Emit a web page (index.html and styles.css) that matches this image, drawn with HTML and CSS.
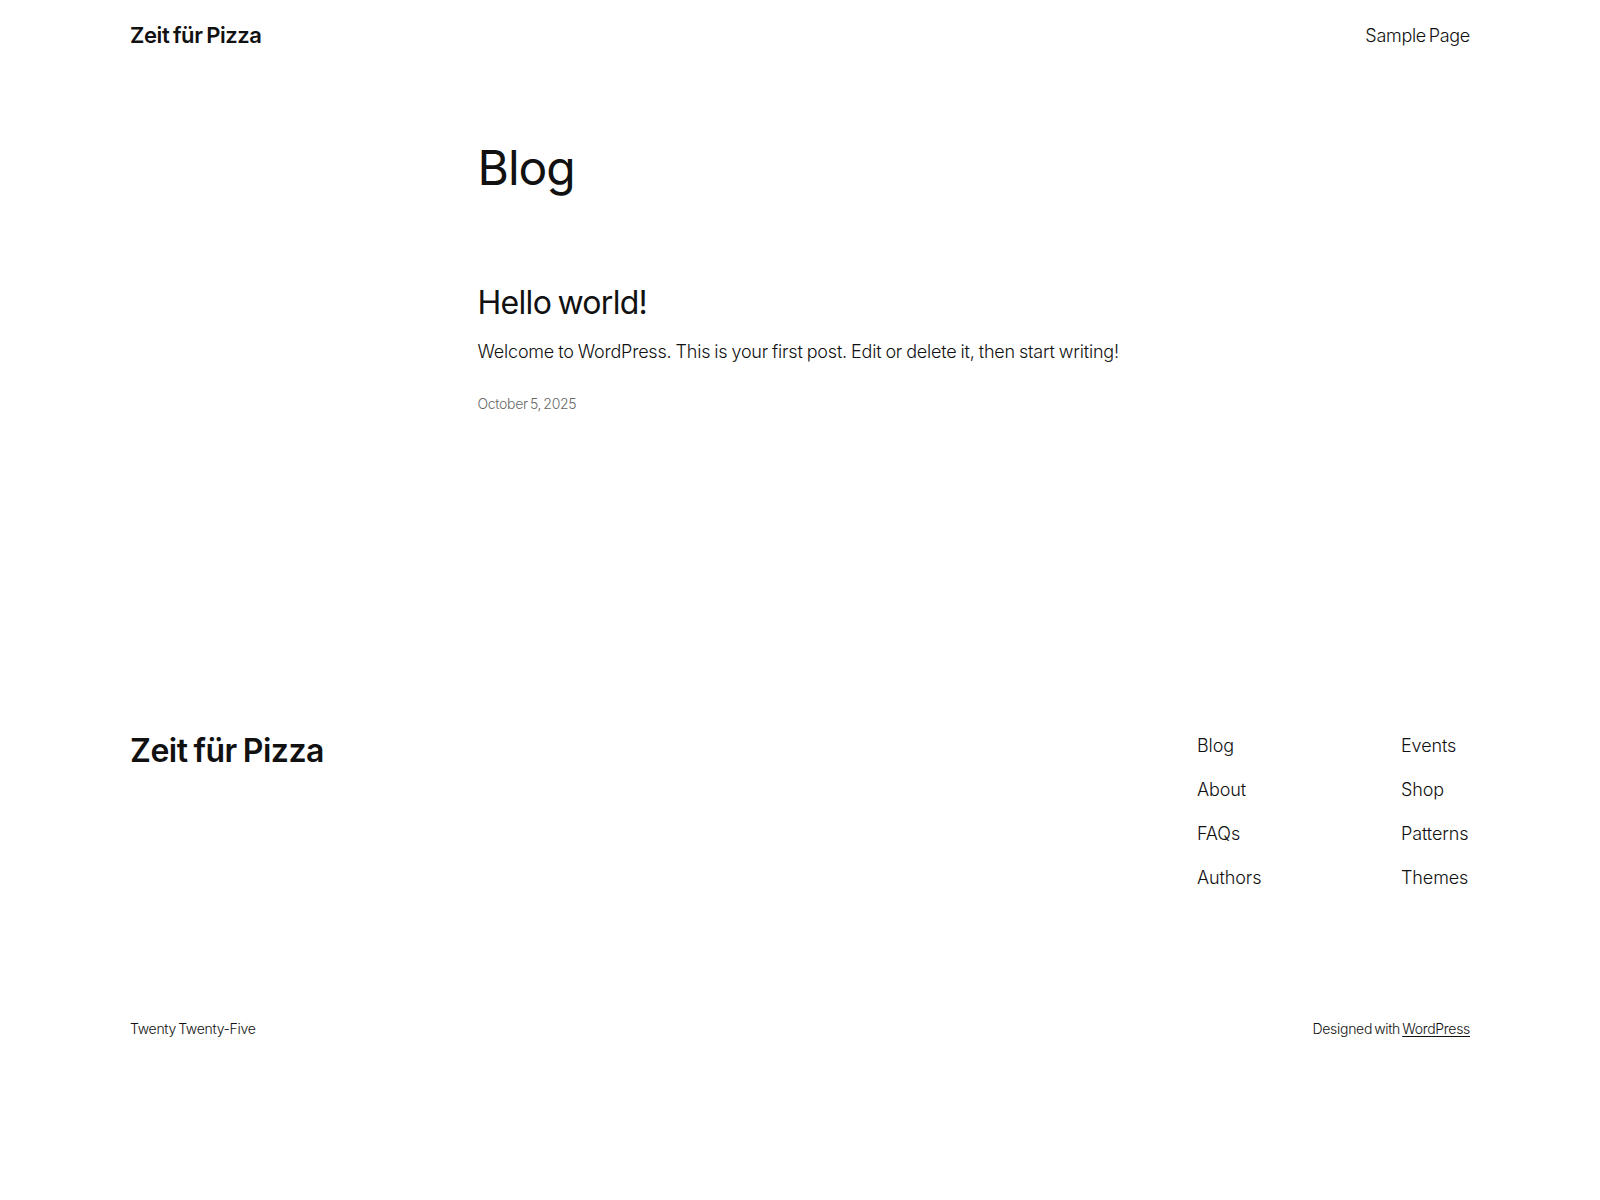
FILE: index.html
```html
<!DOCTYPE html>
<html lang="de">
<head>
<meta charset="utf-8">
<title>Blog – Zeit für Pizza</title>
<link rel="stylesheet" href="styles.css">
</head>
<body>
<header class="site-header">
  <div class="wide header-inner">
    <a class="site-title" href="#">Zeit für Pizza</a>
    <nav class="header-nav"><a href="#">Sample Page</a></nav>
  </div>
</header>
<main class="content">
  <h1 class="page-title">Blog</h1>
  <article class="post">
    <h2 class="post-title"><a href="#">Hello world!</a></h2>
    <p class="post-excerpt">Welcome to WordPress. This is your first post. Edit or delete it, then start writing!</p>
    <div class="post-date">October 5, 2025</div>
  </article>
</main>
<footer class="site-footer">
  <div class="wide footer-top">
    <a class="footer-title" href="#">Zeit für Pizza</a>
    <div class="footer-navs">
      <nav class="footer-col col-a">
        <a href="#">Blog</a>
        <a href="#">About</a>
        <a href="#">FAQs</a>
        <a href="#">Authors</a>
      </nav>
      <nav class="footer-col col-b">
        <a href="#">Events</a>
        <a href="#">Shop</a>
        <a href="#">Patterns</a>
        <a href="#">Themes</a>
      </nav>
    </div>
  </div>
  <div class="wide footer-bottom">
    <span>Twenty Twenty-Five</span>
    <span>Designed with <a class="underline" href="#">WordPress</a></span>
  </div>
</footer>
</body>
</html>
```
FILE: styles.css
```css
html, body {
  margin: 0;
  padding: 0;
  background: #ffffff;
}
body {
  font-family: Inter, "Noto Sans", sans-serif;
  font-weight: 300;
  font-size: 18px;
  line-height: 1.4;
  letter-spacing: -0.1px;
  color: #111111;
}
a {
  color: #111111;
  text-decoration: none;
}
.wide {
  width: 1340px;
  margin: 0 auto;
}
.site-header {
  padding: 20px 0;
}
.header-inner {
  display: flex;
  justify-content: space-between;
  align-items: center;
}
.site-title {
  font-size: 22px;
  font-weight: 600;
  line-height: 1.4;
  letter-spacing: -0.4px;
  word-spacing: -1.5px;
}
.header-nav a {
  font-size: 18px;
  font-weight: 300;
  letter-spacing: -0.3px;
  word-spacing: -2px;
}
.content {
  width: 645px;
  margin: 0 auto;
  padding-top: 70px;
}
.page-title {
  margin: 0;
  font-size: 48px;
  font-weight: 400;
  line-height: 1.125;
  letter-spacing: -1px;
}
.post {
  margin-top: 90px;
}
.post-title {
  margin: 0;
  font-size: 32px;
  font-weight: 400;
  line-height: 1.125;
  letter-spacing: -0.7px;
  word-spacing: -2px;
}
.post-excerpt {
  margin: 18px 0 0;
  letter-spacing: -0.2px;
  word-spacing: -0.8px;
  white-space: nowrap;
}
.post-date {
  margin-top: 30px;
  font-size: 14px;
  color: #686868;
  letter-spacing: -0.3px;
  word-spacing: -1.5px;
}
.site-footer {
  margin-top: 319px;
}
.footer-top {
  display: flex;
  justify-content: space-between;
  align-items: flex-start;
}
.footer-title {
  font-size: 32px;
  font-weight: 600;
  line-height: 1.125;
  letter-spacing: -0.5px;
  word-spacing: -1.5px;
}
.footer-navs {
  display: flex;
}
.footer-col {
  display: flex;
  flex-direction: column;
  gap: 19px;
}
.col-a {
  width: 204px;
}
.col-b {
  width: 69px;
  white-space: nowrap;
}
.footer-bottom {
  margin-top: 129px;
  display: flex;
  justify-content: space-between;
  font-size: 14px;
  letter-spacing: -0.3px;
  word-spacing: -1.5px;
}
.underline {
  text-decoration: underline;
  text-underline-offset: 2px;
}
```
